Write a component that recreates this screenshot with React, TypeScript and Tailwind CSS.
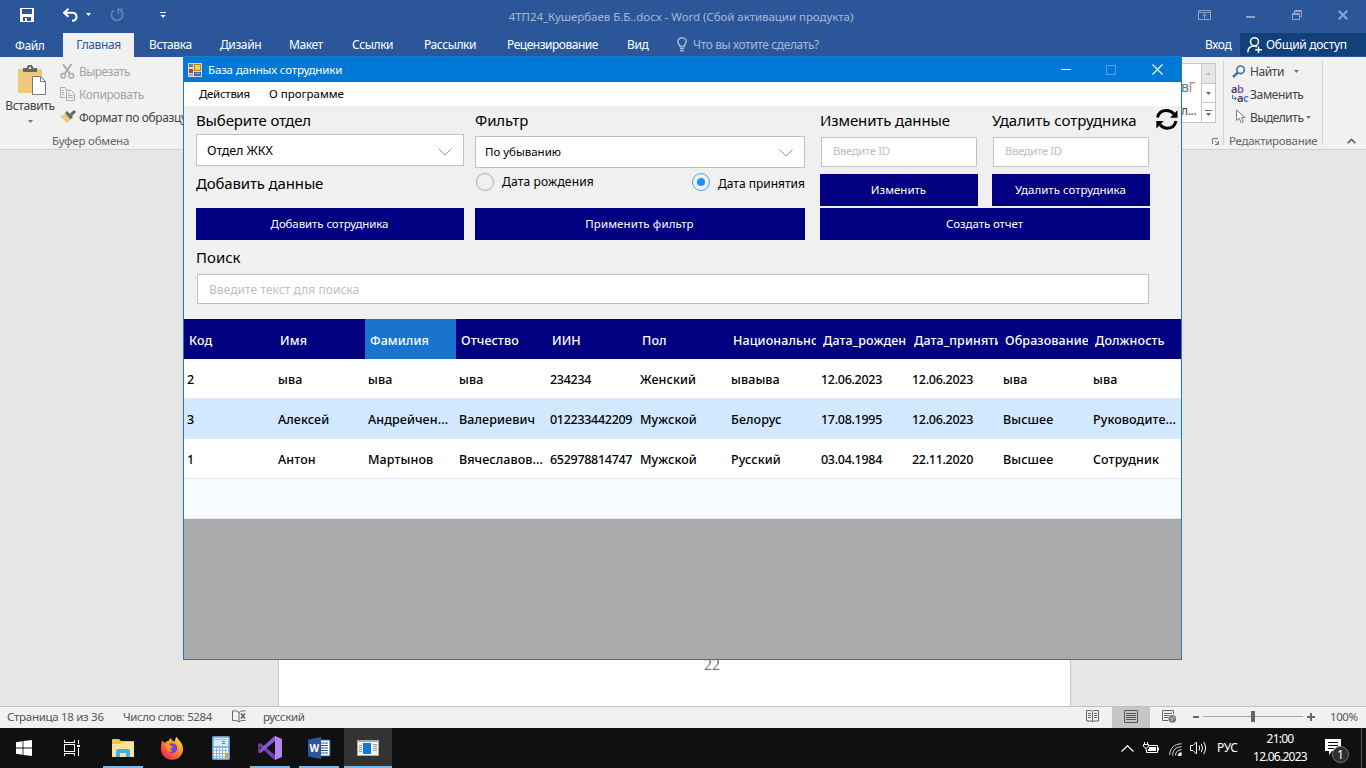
import type { ReactNode } from 'react';

const NAVY = 'bg-[#000080]';

function QuickAccess() {
  return (
    <div className="flex h-[33px] shrink-0 items-center justify-between bg-[#2b579a]">
      <div className="flex h-full w-[508px] items-center pl-5">
        <svg width="14" height="14" viewBox="0 0 14 14" className="mt-[-3px]" shapeRendering="crispEdges">
          <path fill="#fff" fillRule="evenodd" d="M0 0H14V14H0ZM2 1V6H12V1ZM3 9V13H5V10H7V13H11V9Z" />
        </svg>
        <svg width="15" height="14" viewBox="0 0 15 14" className="ml-[29px] mt-[-3px]" fill="none" stroke="#fff" strokeWidth="2">
          <path d="M5.5 0.8L1 4.8L5.5 8.8M1.5 4.8H9C12 4.8 13.5 6.6 13.5 8.8C13.5 11.2 12 12.8 9 12.8" />
        </svg>
        <svg width="5" height="3" className="ml-2 mt-[-4px]"><path d="M0 0H5L2.5 3Z" fill="#fff" /></svg>
        <svg width="14" height="14" viewBox="0 0 14 14" className="ml-[19px] mt-[-3px]" fill="none" stroke="#6081b4" strokeWidth="1.8">
          <path d="M3.8 2.2A5.6 5.6 0 1 0 10.4 2.3M8.2 6V1.4H13" />
        </svg>
        <svg width="6" height="6" className="ml-9 mt-[-4px]"><path d="M0 0H6V1H0ZM0.5 3H5.5L3 6Z" fill="#fff" /></svg>
      </div>
      <div className="text-[11.5px] tracking-[-0.05px] whitespace-nowrap text-[#a7b8d4]">
        4ТП24_Кушербаев Б.Б..docx - Word (Сбой активации продукта)
      </div>
      <div className="flex h-full w-[512px] items-center justify-end pr-[18px] text-[#8ea5c9]">
        <svg width="13" height="10" viewBox="0 0 13 10" className="mt-[-3px]" fill="none" stroke="currentColor">
          <path d="M0.5 0.5H12.5V9.5H0.5ZM1 2.5H12M6.5 8.5V4M4.3 6L6.5 4L8.7 6" />
        </svg>
        <div className="ml-[35px] h-[2px] w-[9px] bg-[#8ea5c9]" />
        <svg width="10" height="10" viewBox="0 0 10 10" className="ml-[37px] mt-[-3px]" fill="none" stroke="currentColor">
          <path d="M0.5 3.5H7.5V9.5H0.5ZM0.5 4.5H7.5M2.5 3V0.5H9.5V6.5H8M2.5 1.5H9.5" />
        </svg>
        <svg width="10" height="10" viewBox="0 0 10 10" className="ml-9 mt-[-3px]" stroke="currentColor" strokeWidth="2">
          <path d="M0.7 0.7L9.3 9.3M9.3 0.7L0.7 9.3" />
        </svg>
      </div>
    </div>
  );
}

function RibbonTabs() {
  return (
    <div className="flex h-6 shrink-0 bg-[#2b579a] text-[12px] leading-[24px] tracking-[-0.4px] whitespace-nowrap text-white">
      <div className="w-[63px] pl-[15px] pt-px">Файл</div>
      <div className="w-[71px] bg-[#f1f1f1] text-center text-[#2b579a]">Главная</div>
      <div className="ml-[15px] w-[71px]">Вставка</div>
      <div className="w-[69px]">Дизайн</div>
      <div className="w-[63px]">Макет</div>
      <div className="w-[72px]">Ссылки</div>
      <div className="w-[83px]">Рассылки</div>
      <div className="w-[120px] tracking-[-0.48px]">Рецензирование</div>
      <div className="w-[50px]">Вид</div>
      <svg width="10" height="15" viewBox="0 0 10 15" className="mt-1" fill="none" stroke="#a7b8d4" strokeWidth="1.5">
        <path d="M3 9.5C3 7.8 0.8 7 0.8 4.6A4.2 3.9 0 0 1 9.2 4.6C9.2 7 7 7.8 7 9.5ZM2.8 11.6H7.2M3.2 13.7H6.8" />
      </svg>
      <div className="ml-1.5 w-[512px] text-[#a7b8d4]">Что вы хотите сделать?</div>
      <div className="w-[35px]">Вход</div>
      <div className="flex h-[23px] w-[126px] bg-[#124078] pl-[7px]">
        <svg width="16" height="16" viewBox="0 0 16 16" className="mt-1" fill="none" stroke="#fff" strokeWidth="1.5">
          <circle cx="7.5" cy="4.7" r="4" />
          <path d="M0.8 15.5C0.8 11.5 3 9 7.3 9C8.4 9 9.3 9.2 10 9.6M11.5 9.5V16M8.2 12.8H15" />
        </svg>
        <span className="ml-[3px] tracking-[-0.3px]">Общий доступ</span>
      </div>
    </div>
  );
}

function Ribbon() {
  return (
    <div className="flex h-[93px] shrink-0 justify-between border-b border-[#d2d2d2] bg-[#f1f1f1] text-[12px] tracking-[-0.35px] whitespace-nowrap text-[#444]">
      <div className="flex w-[190px] flex-col overflow-hidden">
        <div className="flex h-[74px]">
          <div className="flex w-[60px] flex-col items-center pt-2">
            <svg width="29" height="31" viewBox="0 0 29 31" className="ml-1">
              <path d="M0 4H24V28H0Z" fill="#edc87e" />
              <path d="M5 3H9V1H10V0H14V1H15V3H19V7H5Z" fill="#686868" />
              <rect x="11" y="2" width="2" height="2" fill="#f1f1f1" />
              <path d="M14.5 11.5H22.5L27.5 16.5V29.5H14.5Z" fill="#fff" stroke="#777" />
              <path d="M22.5 11.5V16.5H27.5" fill="none" stroke="#777" />
            </svg>
            <div className="pt-px leading-[18px]">Вставить</div>
            <svg width="5" height="3" className="mt-[5px]"><path d="M0 0H5L2.5 3Z" fill="#777" /></svg>
          </div>
          <div className="flex flex-col pt-[3px] leading-[24px]">
            <div className="flex h-[23px] text-[#a5a5a5]">
              <svg width="15" height="15" viewBox="0 0 15 15" className="mr-1 mt-1" fill="none" stroke="#aaa" strokeWidth="1.5">
                <path d="M3 0L10 10M11.5 0L4.5 10" strokeWidth="2" />
                <circle cx="3.2" cy="11.8" r="2.3" /><circle cx="11.3" cy="11.8" r="2.3" />
              </svg><span className="tracking-[-0.55px]">Вырезать</span>
            </div>
            <div className="flex h-[23px] text-[#a5a5a5]">
              <svg width="15" height="14" viewBox="0 0 15 14" className="mr-1 mt-1" fill="none" stroke="#aaa">
                <path d="M5 10.5H0.5V0.5H5L7.5 3M2 3.5H4M2 5.5H4M2 7.5H4M6.5 3.5H11L14.5 7V13.5H6.5ZM8 6.5H10M8 8.5H13M8 10.5H13" />
              </svg><span className="tracking-[-0.42px]">Копировать</span>
            </div>
            <div className="flex h-[23px]">
              <svg width="16" height="13" viewBox="0 0 16 13" className="mr-[3px] mt-1">
                <path d="M0 6L6 4L11 9L7 13Z" fill="#edc87e" />
                <path d="M5 3L7 1L13 7L10.5 9.5Z" fill="#666" /><path d="M9.5 4L14 0L16 2L12 6Z" fill="#666" />
              </svg>Формат по образцу
            </div>
          </div>
        </div>
        <div className="pl-[52px] pt-0.5 text-[11.5px] leading-[18px] tracking-[-0.2px] text-[#666]"><span className="relative top-px">Буфер обмена</span></div>
      </div>
      <div className="flex w-[186px]">
        <div className="flex w-[43px] flex-col">
          <div className="mt-1.5 flex h-[60px] w-9 justify-between border border-l-0 border-[#c6c6c6] bg-white">
            <div className="w-[22px] overflow-hidden pt-[11px] leading-[24px]">
              <div className="pl-[1px] text-[14px] text-[#4a7ab0]">в<span className="text-[#c0886d]">Г</span></div>
              <div className="pl-px">л...</div>
            </div>
            <div className="flex w-[14px] flex-col border-l border-[#c6c6c6]">
              <div className="flex h-5 items-center justify-center border-b border-[#c6c6c6] bg-[#e6e6e6]"><svg width="5" height="3"><path d="M0 3H5L2.5 0Z" fill="#bbb" /></svg></div>
              <div className="flex h-[19px] items-center justify-center border-b border-[#c6c6c6]"><svg width="5" height="3"><path d="M0 0H5L2.5 3Z" fill="#666" /></svg></div>
              <div className="flex h-[19px] items-center justify-center"><svg width="7" height="6"><path d="M0 0H7V1H0ZM1 3H6L3.5 6Z" fill="#666" /></svg></div>
            </div>
          </div>
          <svg width="7" height="7" viewBox="0 0 7 7" className="ml-8 mt-[15px]" fill="none" stroke="#777"><path d="M0.5 6V0.5H6M3 3L6 6M6.5 3V6.5H3" /></svg>
        </div>
        <div className="mt-1 h-[84px] w-px bg-[#d4d4d4]" />
        <div className="flex w-[98px] flex-col">
          <div className="pl-2 pt-[3px] leading-[23px]">
            <div className="flex h-[23px] items-center">
              <svg width="14" height="13" viewBox="0 0 14 13" fill="none" stroke="#41719f"><circle cx="8.6" cy="4.8" r="3.8" strokeWidth="1.6" /><path d="M5.8 7.5L1 12" strokeWidth="2.4" /></svg>
              <span className="ml-1 w-[44px] tracking-[-0.42px]">Найти</span>
              <svg width="5" height="3"><path d="M0 0H5L2.5 3Z" fill="#777" /></svg>
            </div>
            <div className="flex h-[23px] items-center">
              <div className="flex h-[18px] w-[18px] flex-col text-[11px] leading-[9px] font-semibold tracking-[-0.5px]">
                <div className="-ml-px h-[9px] -mt-0.5">a<span className="text-[#8a55ad]">b</span></div>
                <div className="flex h-[9px]"><svg width="5" height="6" className="mt-0.5"><path d="M0.5 0V3.5H4M2.5 1.5L4.5 3.5L2.5 5.5" fill="none" stroke="#3f7ac0" /></svg><span>a<span className="text-[#3f7ac0]">c</span></span></div>
              </div>
              <span>Заменить</span>
            </div>
            <div className="flex h-[23px] items-center">
              <svg width="10" height="15" viewBox="0 0 10 15" className="ml-1 -mt-0.5" fill="#fff" stroke="#777"><path d="M0.6 1L0.6 11.5L3.2 9.3L5.2 13.8L7.2 12.8L5.4 8.6L8.8 8.3Z" /></svg>
              <span className="ml-1 w-[56px] tracking-[-0.5px]">Выделить</span>
              <svg width="5" height="3"><path d="M0 0H5L2.5 3Z" fill="#777" /></svg>
            </div>
          </div>
          <div className="mt-[2px] pl-[5px] text-[11.5px] leading-[20px] tracking-[-0.28px] text-[#666]">Редактирование</div>
        </div>
        <div className="mt-1 h-[84px] w-px bg-[#d4d4d4]" />
        <svg width="9" height="6" viewBox="0 0 9 6" className="ml-6 mt-[81px]" fill="none" stroke="#666" strokeWidth="1.8"><path d="M0.7 5.2L4.5 1.4L8.3 5.2" /></svg>
      </div>
    </div>
  );
}

function StatusBar() {
  return (
    <div className="flex h-[22px] shrink-0 border-t border-[#c0c0c0] bg-[#f1f1f1] text-[11.5px] leading-[20px] tracking-[-0.3px] whitespace-nowrap text-[#555]">
      <div className="w-[116px] pl-[7px]">Страница 18 из 36</div>
      <div className="w-[116px] pl-[7px] tracking-[-0.4px]">Число слов: 5284</div>
      <svg width="15" height="13" viewBox="0 0 15 13" className="mt-[3px]" fill="none" stroke="#666">
        <path d="M7 2.5C5.5 0.7 3 0.7 0.5 1V10.5C3 10.3 5.5 10.5 7 12M7 2V12M7 2.5C8.5 0.7 11 0.7 13.5 1M7 12C8 10.5 10 10.3 13.5 10.5" />
        <path d="M9 3.5L13 8.5M13 3.5L9 8.5" strokeWidth="1.6" />
      </svg>
      <div className="ml-4 grow">русский</div>
      <svg width="14" height="13" viewBox="0 0 14 13" className="mr-3 mt-[3px]" fill="none" stroke="#666">
        <path d="M0.5 0.5H5.5L6.5 1.5L7.5 0.5H12.5V11H7.5L6.5 12L5.5 11H0.5ZM6.5 1V12M2 3.5H5M2 5.5H5M2 7.5H5M8 3.5H11M8 5.5H11M8 7.5H11" />
      </svg>
      <div className="flex w-[38px] justify-center bg-[#c6c6c6]">
        <svg width="14" height="13" viewBox="0 0 14 13" className="mt-[3px]" fill="none" stroke="#555"><path d="M0.5 0.5H13.5V12.5H0.5ZM2 3.5H12M2 5.5H12M2 7.5H12M2 9.5H12" /></svg>
      </div>
      <svg width="15" height="13" viewBox="0 0 15 13" className="ml-3 mt-[3px]" fill="none" stroke="#666">
        <path d="M6 10.5H0.5V0.5H11.5V4M2 3.5H10M2 5.5H7M2 7.5H6" /><circle cx="10.3" cy="8.8" r="3.9" fill="#777" stroke="none" /><path d="M8.5 7.5L10.5 9L9.5 11M11 6.5L12.5 8.5" stroke="#ddd" />
      </svg>
      <div className="ml-4 mt-[9px] h-[2px] w-1.5 bg-[#666]" />
      <div className="ml-1 flex h-[20px] w-[100px] items-center justify-center bg-[linear-gradient(#a6a6a6,#a6a6a6)] bg-[length:100%_1px] bg-[position:0_9px] bg-no-repeat">
        <div className="-mt-0.5 h-[11px] w-1 bg-[#666]" />
      </div>
      <svg width="8" height="8" className="ml-1 mt-[6px]"><path d="M3 0H5V3H8V5H5V8H3V5H0V3H3Z" fill="#666" /></svg>
      <div className="ml-[15px] w-9 tracking-[-0.45px]">100%</div>
    </div>
  );
}

function TaskButton({ children, running = false, active = false }: { children: ReactNode; running?: boolean; active?: boolean }) {
  return (
    <div className={`flex h-10 w-12 flex-col items-center justify-between ${active ? 'bg-[#333]' : ''}`}>
      <div className="flex h-[38px] items-center pt-[2px]">{children}</div>
      <div className={`h-[2px] ${active ? 'w-12' : 'w-10'} ${running || active ? 'bg-[#76b9ed]' : ''}`} />
    </div>
  );
}

function Taskbar() {
  return (
    <div className="flex h-10 shrink-0 bg-[#101010] text-white">
      <TaskButton>
        <svg width="16" height="16" viewBox="0 0 16 16" fill="#fff"><path d="M0 2.2L6.6 1.2V7.5H0ZM7.4 1.1L16 0V7.5H7.4ZM0 8.4H6.6V14.8L0 13.8ZM7.4 8.4H16V16L7.4 14.9Z" /></svg>
      </TaskButton>
      <TaskButton>
        <svg width="17" height="16" viewBox="0 0 17 16" fill="none" stroke="#fff" shapeRendering="crispEdges"><path d="M0.5 0V2.5H10.5V0M0.5 4.5H10.5V11.5H0.5ZM0.5 16V13.5H10.5V16M14.5 0V4M14.5 8V16" /><path d="M13 5H16V7H13Z" fill="#fff" stroke="none" /></svg>
      </TaskButton>
      <div className="ml-[3px] flex gap-px">
        <TaskButton running>
          <svg width="22" height="19" viewBox="0 0 22 19"><path d="M0 1Q0 0 1 0H7L9 2H21Q22 2 22 3V18H0Z" fill="#f3c546" /><path d="M0 5H8L10 3H22V18H0Z" fill="#fde29a" /><path d="M4 18V12Q4 10 6 10H16Q18 10 18 12V18H14V14H8V18Z" fill="#36b3e8" /></svg>
        </TaskButton>
        <TaskButton>
          <svg width="24" height="24" viewBox="0 0 24 24">
            <defs><linearGradient id="fx" x1="0.9" y1="0" x2="0.2" y2="1"><stop offset="0" stopColor="#ffe84a" /><stop offset="0.4" stopColor="#ff9a27" /><stop offset="0.75" stopColor="#ff4b3e" /><stop offset="1" stopColor="#e3206a" /></linearGradient></defs>
            <path d="M2 4.5L4.8 7C6 5.5 7 5 8.5 5C9 3.5 9.8 2.6 11 2C11.2 4 12.5 5 15 5.5C15 3.5 15.5 2 16.5 0.5C18 4 23 6.5 23 13A11 10.8 0 0 1 1 13C1 10 1.3 7 2 4.5Z" fill="url(#fx)" />
            <circle cx="12.3" cy="12.3" r="5" fill="#7542e5" />
            <path d="M5 8.5C8 7.5 10 8.2 11.5 10.3C13.5 10.2 13.5 12 11 12.2C9.5 12.4 10 14.6 12.5 14.2C11 17 6.5 15.5 6.5 12.5Z" fill="#ff9422" />
          </svg>
        </TaskButton>
        <TaskButton>
          <svg width="18" height="24" viewBox="0 0 18 24"><rect x="0.5" y="0.5" width="17" height="23" rx="1" fill="#8bbcdf" stroke="#5f9cc9" /><rect x="2" y="2" width="14" height="8" fill="#d7ebf7" /><path d="M2 3.5H15" stroke="#edb65b" /><path d="M10 7.5H13M10 5.5H13" stroke="#4b88b8" /><path d="M3 12V22M6 12V22M9 12V22M12 12V22M15 12V17" stroke="#fff" strokeWidth="2" strokeDasharray="2 1" /><rect x="13" y="17" width="3" height="5" fill="#f39a2c" /></svg>
        </TaskButton>
        <TaskButton running>
          <svg width="24" height="24" viewBox="0 0 24 24"><path d="M0.8 7.5L2.8 7.5L17.5 19.5V24L16 23.5L0.8 9.5Z" fill="#7440b9" /><path d="M0.8 16.5L2.8 17L17.5 4.5V0L16 0.5L0.8 14.5Z" fill="#8c55d4" /><path d="M0 8.2L1.8 7.4V16.8L0 16Z" fill="#68399f" /><path d="M17 0L24 3V21L17 24Z" fill="#b583f2" /></svg>
        </TaskButton>
        <TaskButton running>
          <svg width="23" height="22" viewBox="0 0 23 22"><path d="M12 3H22V19H12Z" fill="#fff" stroke="#2b579a" /><path d="M13 6H20M13 8.5H20M13 11H20M13 13.5H20M13 16H20" stroke="#2b579a" /><path d="M0 2.5L13 0V22L0 19.5Z" fill="#2b579a" /><text x="1.5" y="14.8" fontSize="10" fontWeight="700" fill="#fff" fontFamily="Noto Sans">W</text></svg>
        </TaskButton>
        <TaskButton active>
          <svg width="22" height="16" viewBox="0 0 22 16" shapeRendering="crispEdges"><path d="M0 0H22V16H0Z" fill="#aaa" /><path d="M1 2H21V15H1Z" fill="#f5f5f5" /><path d="M6 3H14V14H6Z" fill="#0b7ad8" /><path d="M2 5.5H5M2 7.5H5M2 9.5H5M2 11.5H5M16 4.5H20M16 6.5H20M16 8.5H20M16 10.5H20" stroke="#999" /></svg>
        </TaskButton>
      </div>
      <div className="flex grow items-center justify-end">
        <svg width="13" height="7" viewBox="0 0 13 7" fill="none" stroke="#fff" strokeWidth="1.2"><path d="M0.5 6.5L6.5 0.8L12.5 6.5" /></svg>
        <svg width="16" height="12" viewBox="0 0 16 12" className="ml-[9px]" fill="none" stroke="#fff"><path d="M5.5 3.5H14.5V10.5H3.5V8M1.5 0V2.5M4.5 0V2.5M0.5 2.5H5.5V4.5L3.5 6H2.5L0.5 4.5ZM3 6V8.5" /><path d="M6 5H13V9H5V7H6Z" fill="#fff" stroke="none" /><path d="M15.5 5.5V8.5" /></svg>
        <svg width="13" height="13" viewBox="0 0 13 13" className="ml-[10px] mt-0.5" fill="none" stroke="#ddd"><path d="M0.7 12C0.7 5.5 5.5 0.8 12.5 0.8M3.6 12.5C3.6 7 7.2 3.8 12.5 3.8M6.4 12.5C6.6 9 8.8 6.8 12.5 6.7" /><path d="M9 12.5C9.2 10.8 10.4 9.8 12.2 9.7V12.5Z" fill="#fff" /></svg>
        <svg width="17" height="14" viewBox="0 0 17 14" className="ml-2" fill="none" stroke="#fff"><path d="M0.5 4.5H3L6.5 1V13L3 9.5H0.5ZM9 4.5Q10.3 7 9 9.5M11.3 2.8Q13.8 7 11.3 11.2M13.6 1Q17.5 7 13.6 13" /></svg>
        <div className="ml-2.5 w-[31px] text-[12px] tracking-[-0.3px]">РУС</div>
        <div className="flex w-[64px] flex-col items-center text-[12px] leading-[18px] tracking-[-0.75px]"><div>21:00</div><div>12.06.2023</div></div>
        <div className="relative ml-[13px] h-6 w-6 pt-[3px]">
          <svg width="16" height="16" viewBox="0 0 16 16"><path d="M0 0H16V12H7L4 16V12H0Z" fill="#fff" /><path d="M3 3.5H13M3 6.5H13M3 9.5H9" stroke="#101010" /></svg>
          <div className="absolute left-[7px] top-[10px] flex h-[17px] w-[17px] items-center justify-center rounded-full border border-[#777] bg-[#2e2e2e] text-[12px] leading-none">1</div>
        </div>
        <div className="ml-[12px] mr-1 h-10 w-px bg-[#555]" />
      </div>
    </div>
  );
}

function FormButton({ children, className = '' }: { children: ReactNode; className?: string }) {
  return <button className={`block h-8 ${NAVY} pr-px text-[11.5px] text-white ${className}`}>{children}</button>;
}

function Select({ value, className = '' }: { value: string; className?: string }) {
  return (
    <div className={`flex h-8 items-center justify-between border border-[#c1c1c1] bg-white pr-[11px] ${className}`}>
      <span>{value}</span>
      <svg width="14" height="8" viewBox="0 0 14 8" className="mt-0.5" fill="none" stroke="#999"><path d="M0.5 0.5L7 7L13.5 0.5" /></svg>
    </div>
  );
}

function IdField() {
  return <div className="mx-px h-[30px] border border-[#c1c1c1] bg-white pl-[11px] text-[11.5px] leading-[26px] tracking-[-0.45px] text-[#c0c0c0]">Введите ID</div>;
}

const LABEL = 'text-[15px] whitespace-nowrap';

function Filters() {
  return (
    <div className="h-[213px] shrink-0 bg-[#f0f0f0] pl-3">
      <div className="flex">
        <div className="w-[268px]">
          <div className={`${LABEL} h-7 leading-[29px] tracking-[-0.15px]`}>Выберите отдел</div>
          <Select value="Отдел ЖКХ" className="pl-2.5 pt-0.5 text-[12.5px] tracking-[-0.05px]" />
          <div className={`${LABEL} h-[42px] leading-[35px] tracking-[-0.15px]`}>Добавить данные</div>
          <FormButton className="w-full tracking-[-0.1px]">Добавить сотрудника</FormButton>
        </div>
        <div className="ml-[11px] w-[330px]">
          <div className={`${LABEL} h-[30px] leading-[29px] tracking-[-0.1px]`}>Фильтр</div>
          <Select value="По убыванию" className="pl-[9px] text-[11.5px]" />
          <div className="flex h-10 justify-between pl-px pt-[5px] text-[12px] leading-[17px] whitespace-nowrap">
            <div className="flex"><div className="mr-2 h-[18px] w-[18px] rounded-full border border-[#adadad]" /><span className="tracking-[0.18px]">Дата рождения</span></div>
            <div className="flex"><div className="mr-2 flex h-[18px] w-[18px] items-center justify-center rounded-full border border-[#4ba3f7]"><div className="h-2 w-2 rounded-full bg-[#1e90ff]" /></div><span className="pt-0.5">Дата принятия</span></div>
          </div>
          <FormButton className="w-full tracking-[0.1px]">Применить фильтр</FormButton>
        </div>
        <div className="ml-[15px] w-[330px]">
          <div className="flex justify-between">
            <div className="w-[158px]">
              <div className={`${LABEL} h-[31px] leading-[29px] tracking-[-0.1px]`}>Изменить данные</div>
              <IdField />
              <FormButton className="mt-[7px] w-full">Изменить</FormButton>
            </div>
            <div className="w-[158px]">
              <div className={`${LABEL} h-[31px] leading-[29px]`}>Удалить сотрудника</div>
              <IdField />
              <FormButton className="mt-[7px] w-full">Удалить сотрудника</FormButton>
            </div>
          </div>
          <FormButton className="mt-0.5 w-full tracking-[-0.1px]">Создать отчет</FormButton>
        </div>
        <svg width="22" height="21" viewBox="0 0 22 21" className="ml-1.5 mt-[3px]">
          <path d="M1.5 8.5C2.5 4 6 1.5 10.5 1.5C13.5 1.5 16 2.7 18 5" fill="none" stroke="#000" strokeWidth="2.9" />
          <path d="M21.5 1.2V8.7H14Z" />
          <path d="M20 12C19 16.5 15.5 19.2 11.3 19.2C8.5 19.2 6 18 4 15.7" fill="none" stroke="#000" strokeWidth="2.9" />
          <path d="M0.3 19.5V12H7.8Z" />
        </svg>
      </div>
      <div className={`${LABEL} h-[34px] leading-[35px]`}>Поиск</div>
      <div className="ml-px h-[30px] w-[952px] border border-[#c1c1c1] bg-white pl-[11px] text-[12px] leading-[29px] tracking-[0.05px] text-[#c0c0c0]">Введите текст для поиска</div>
    </div>
  );
}

const COLUMNS = 'grid grid-cols-[91px_90px_91px_91px_90px_91px_90px_91px_91px_90px_91px]';
const HEADERS = ['Код', 'Имя', 'Фамилия', 'Отчество', 'ИИН', 'Пол', 'Национальность', 'Дата_рождения', 'Дата_принятия', 'Образование', 'Должность'];
const ROWS = [
  ['2', 'ыва', 'ыва', 'ыва', '234234', 'Женский', 'ываыва', '12.06.2023', '12.06.2023', 'ыва', 'ыва'],
  ['3', 'Алексей', 'Андрейчен...', 'Валериевич', '012233442209', 'Мужской', 'Белорус', '17.08.1995', '12.06.2023', 'Высшее', 'Руководите...'],
  ['1', 'Антон', 'Мартынов', 'Вячеславов...', '652978814747', 'Мужской', 'Русский', '03.04.1984', '22.11.2020', 'Высшее', 'Сотрудник'],
];

function EmployeeTable() {
  return (
    <div className="flex grow flex-col bg-[#ababab] text-[12.5px] font-medium whitespace-nowrap">
      <div className={`${COLUMNS} ${NAVY} h-10 leading-[44px] tracking-[0.1px] text-white`}>
        {HEADERS.map((h, i) => (
          <div key={h} className={`h-10 pl-[5px] pr-[2px] ${i === 2 ? 'bg-[#1974cd]' : ''}`}>
            <div className="h-10 overflow-hidden">{h}</div>
          </div>
        ))}
      </div>
      {ROWS.map((row, r) => (
        <div key={row[0]} className={`${COLUMNS} h-10 border-b border-[#dbeafa] leading-[41px] text-black ${r === 1 ? 'bg-[#d2e8ff]' : 'bg-white'}`}>
          {row.map((cell, i) => (
            <div key={i} className={`pl-[3px] ${/^[\d.]+$/.test(cell) ? 'tracking-[-0.3px]' : 'tracking-[0.1px]'}`}>{cell}</div>
          ))}
        </div>
      ))}
      <div className="h-10 border-b border-[#dbeafa] bg-[#f7fbff]" />
    </div>
  );
}

function EmployeeWindow() {
  return (
    <div className="absolute left-[183px] top-[56px] flex h-[604px] w-[999px] flex-col border border-[#1b7bcb] text-black">
      <div className="flex h-[25px] shrink-0 items-center bg-[#0078d7] pl-1 text-white">
        <svg width="14" height="14" viewBox="0 0 14 14" shapeRendering="crispEdges">
          <path d="M0 0H14V14H0Z" fill="#d8d8d8" /><path d="M1 1H5V4H1Z" fill="#777" /><path d="M1 6H5V10H1Z" fill="#c23b35" /><path d="M6 1H13V8H6Z" fill="#b98418" /><path d="M7 2H12V7H7Z" fill="#f7d04d" /><path d="M6 9H13V13H6Z" fill="#3f67b5" /><path d="M7 10H12V11H7Z" fill="#85a8e5" /><path d="M1 11H5V13H1Z" fill="#aaa" />
        </svg>
        <span className="ml-1.5 grow text-[11.5px] leading-[24px] tracking-[-0.15px]">База данных сотрудники</span>
        <div className="h-px w-2.5 bg-white" />
        <div className="ml-[35px] h-2.5 w-2.5 border border-[#4fa3e6]" />
        <svg width="11" height="11" viewBox="0 0 11 11" className="ml-9 mr-[18px]" stroke="#fff" strokeWidth="1.1"><path d="M0.5 0.5L10.5 10.5M10.5 0.5L0.5 10.5" /></svg>
      </div>
      <div className="flex h-6 shrink-0 bg-white text-[11.5px] leading-[24px]">
        <div className="w-[84px] pl-[15px] tracking-[-0.3px]">Действия</div>
        <div className="pl-px">О программе</div>
      </div>
      <Filters />
      <EmployeeTable />
    </div>
  );
}

export default function App() {
  return (
    <div className="relative flex h-[768px] w-[1366px] flex-col overflow-hidden font-['Noto_Sans','Open_Sans',sans-serif]">
      <QuickAccess />
      <RibbonTabs />
      <Ribbon />
      <div className="flex grow justify-center bg-[#e6e6e6] pr-[17px]">
        <div className="flex w-[793px] items-end justify-center border-x border-[#c6c6c6] bg-white pb-[31px] pl-[75px] font-['Liberation_Serif',serif] text-[16px] leading-[20px] text-[#777]">22</div>
      </div>
      <StatusBar />
      <Taskbar />
      <EmployeeWindow />
    </div>
  );
}
